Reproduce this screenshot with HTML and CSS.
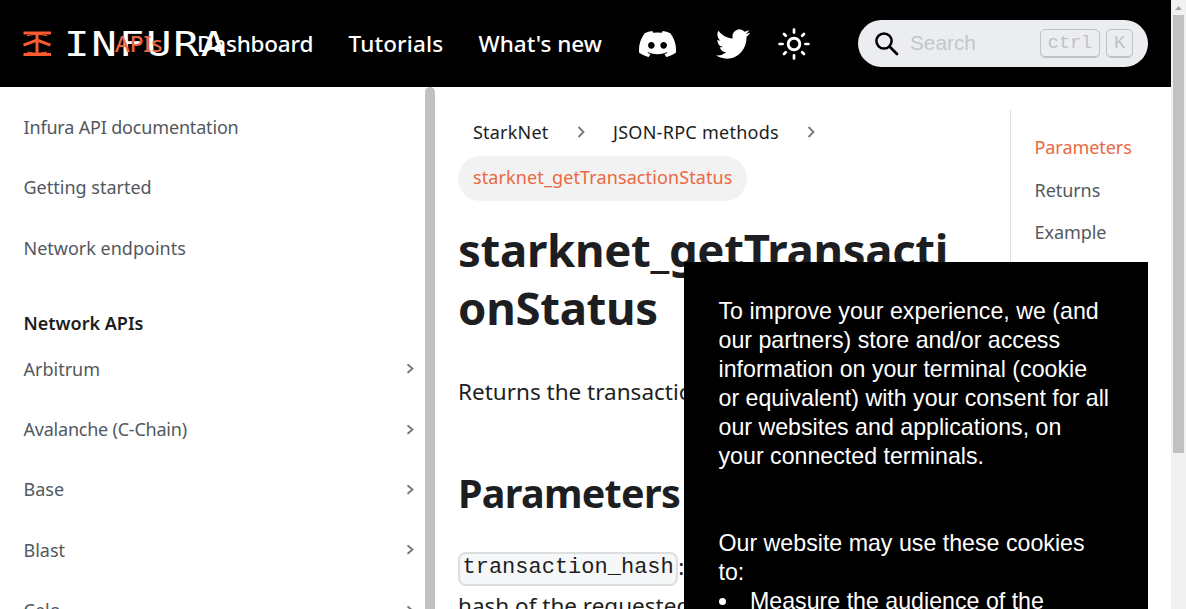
FILE: index.html
```html
<!DOCTYPE html>
<html lang="en">
<head>
<meta charset="utf-8">
<title>starknet_getTransactionStatus | INFURA</title>
<link rel="stylesheet" href="styles.css">
</head>
<body>
<div class="page">
  <header class="navbar">
    <a class="logo">
      <svg class="logo-mark" width="28" height="26" viewBox="0 0 28 26" fill="none" stroke="#ff5a30" stroke-width="3"><path d="M.5 2h27.500M.5 23.500h27.500M14 2v21.500"/><path d="M.5 14.200 14 9.200l13.500 5" stroke-width="3"/><path d="M4 4.600 14 3l10 1.600M4 21 14 22.500 24 21" stroke-width="1"/></svg>
      <svg class="logo-word" width="160" height="32"><text x="0" y="28" transform="scale(1.25 1)">INFURA</text></svg>
    </a>
    <nav class="links">
      <a class="link active">APIs</a>
      <a class="link dashboard">Dashboard</a>
      <a class="link tutorials">Tutorials</a>
      <a class="link">What's new</a>
    </nav>
    <div class="icons">
      <svg class="discord" width="37" height="26" viewBox="0 0 127 96" preserveAspectRatio="none" fill="#fff"><path d="M107.700 8.070A105.150 105.150 0 0 0 81.470 0a72.060 72.060 0 0 0-3.360 6.830 97.680 97.680 0 0 0-29.110 0A72.370 72.370 0 0 0 45.640 0a105.890 105.890 0 0 0-26.250 8.090C2.790 32.650-1.710 56.600.54 80.210a105.730 105.730 0 0 0 32.170 16.150 77.700 77.700 0 0 0 6.890-11.110 68.420 68.420 0 0 1-10.850-5.180c.91-.66 1.800-1.340 2.660-2a75.570 75.570 0 0 0 64.320 0c.87.71 1.760 1.390 2.660 2a68.680 68.680 0 0 1-10.870 5.190 77 77 0 0 0 6.890 11.100 105.250 105.250 0 0 0 32.190-16.140c2.640-27.380-4.510-51.110-18.900-72.150ZM42.450 65.690c-6.270 0-11.450-5.690-11.450-12.690s5-12.740 11.430-12.740S54 46 53.890 53s-5.050 12.690-11.440 12.690Zm42.240 0c-6.280 0-11.440-5.690-11.440-12.690s5-12.740 11.440-12.740S96.230 46 96.120 53s-5.040 12.690-11.430 12.690Z"/></svg>
      <svg class="twitter" width="34" height="30" viewBox="0 2 24 20" preserveAspectRatio="none" fill="#fff"><path d="M23.953 4.570a10 10 0 0 1-2.825.775 4.958 4.958 0 0 0 2.163-2.723c-.951.555-2.005.959-3.127 1.184a4.920 4.920 0 0 0-8.384 4.482C7.690 8.095 4.067 6.130 1.640 3.162a4.822 4.822 0 0 0-.666 2.475c0 1.710.870 3.213 2.188 4.096a4.904 4.904 0 0 1-2.228-.616v.060a4.923 4.923 0 0 0 3.946 4.827 4.996 4.996 0 0 1-2.212.085 4.936 4.936 0 0 0 4.604 3.417 9.867 9.867 0 0 1-6.102 2.105c-.390 0-.779-.023-1.170-.067a13.995 13.995 0 0 0 7.557 2.209c9.053 0 13.998-7.496 13.998-13.985 0-.210 0-.420-.015-.630A9.935 9.935 0 0 0 24 4.590z"/></svg>
      <svg class="sun" width="32" height="32" viewBox="0 0 32 32" fill="none" stroke="#fff" stroke-width="2.700" stroke-linecap="round"><circle cx="16" cy="16" r="5.800" stroke-width="2.900"/><path d="M16 1.600v3M16 27.400v3M1.600 16h3M27.400 16h3M6 6l1.800 1.800M24.200 24.200 26 26M6 26l1.800-1.800M24.200 7.800 26 6"/></svg>
    </div>
    <div class="search">
      <svg width="24" height="24" viewBox="0 0 24 24" fill="none" stroke="#000"><circle cx="9" cy="9" r="7.600" stroke-width="2.500"/><path d="m14.500 14.500 7.500 7.500" stroke-width="2.800" stroke-linecap="round"/></svg>
      <span class="placeholder">Search</span>
      <kbd class="key ctrl">ctrl</kbd><kbd class="key">K</kbd>
    </div>
  </header>
  <div class="body">
    <aside class="sidebar">
      <ul class="menu">
        <li class="item tight">Infura API documentation</li>
        <li class="item">Getting started</li>
        <li class="item">Network endpoints</li>
        <li class="group">Network APIs</li>
        <li class="item">Arbitrum<svg class="caret" width="7" height="11" viewBox="0 0 7 11"><path d="M1.200 1v1L5.500 5.500 1.200 9.200v1"/></svg></li>
        <li class="item tighter">Avalanche (C-Chain)<svg class="caret" width="7" height="11" viewBox="0 0 7 11"><path d="M1.200 1v1L5.500 5.500 1.200 9.200v1"/></svg></li>
        <li class="item">Base<svg class="caret" width="7" height="11" viewBox="0 0 7 11"><path d="M1.200 1v1L5.500 5.500 1.200 9.200v1"/></svg></li>
        <li class="item">Blast<svg class="caret" width="7" height="11" viewBox="0 0 7 11"><path d="M1.200 1v1L5.500 5.500 1.200 9.200v1"/></svg></li>
        <li class="item">Celo<svg class="caret" width="7" height="11" viewBox="0 0 7 11"><path d="M1.200 1v1L5.500 5.500 1.200 9.200v1"/></svg></li>
      </ul>
      <div class="sidebar-thumb"></div>
    </aside>
    <main class="content">
      <div class="crumbs">
        <span class="crumb first">StarkNet</span>
        <svg class="sep" width="9" height="14" viewBox="0 0 9 14"><path d="m1.500 2 5 5-5 5"/></svg>
        <span class="crumb second">JSON-RPC methods</span>
        <svg class="sep" width="9" height="14" viewBox="0 0 9 14"><path d="m1.500 2 5 5-5 5"/></svg>
      </div>
      <span class="pill">starknet_getTransactionStatus</span>
      <h1 class="title">starknet_getTransacti<br>onStatus</h1>
      <p class="lead">Returns the transaction status.</p>
      <h2 class="subtitle">Parameters</h2>
      <p class="param"><code class="code">transaction_hash</code>:<br>hash of the requested</p>
    </main>
    <aside class="toc">
      <a class="toc-link active">Parameters</a>
      <a class="toc-link">Returns</a>
      <a class="toc-link">Example</a>
    </aside>
  </div>
</div>
<div class="scrollbar">
  <svg width="15" height="15" viewBox="0 0 15 15"><path d="M4 10h7L7.500 6z" fill="#a3a3a3"/></svg>
  <div class="thumb"></div>
</div>
<section class="cookie">
  <p class="cookie-text">To improve your experience, we (and<br>our partners) store and/or access<br>information on your terminal (cookie<br>or equivalent) with your consent for all<br>our websites and applications, on<br>your connected terminals.</p>
  <p class="cookie-text">Our website may use these cookies<br>to:</p>
  <ul class="cookie-list"><li class="cookie-item">Measure the audience of the</li></ul>
</section>
</body>
</html>
```
FILE: styles.css
```css
* { box-sizing: border-box; }
body { margin: 0; display: flex; width: 1186px; height: 609px; overflow: hidden; background: #fff; font-family: "Noto Sans", sans-serif; color: #1c1e21; position: relative; }
p, h1, h2, ul { margin: 0; padding: 0; }
svg { display: block; flex: none; }
.page { width: 1171px; height: 609px; display: flex; flex-direction: column; }

.navbar { flex: none; height: 87px; background: #000; display: flex; align-items: center; padding: 0 23px; }
.logo { flex: none; width: 92px; display: flex; align-items: center; gap: 13px; }
.logo-word { overflow: visible; }
.logo-word text { font-family: "DejaVu Sans Mono", monospace; font-size: 34px; letter-spacing: 1.4px; fill: #fff; }
.links { flex: none; width: 524px; display: flex; position: relative; white-space: nowrap; font-size: 22.5px; font-weight: 500; line-height: 30px; color: #fff; }
.link.active { color: #eb6841; width: 82px; }
.dashboard { width: 151.5px; letter-spacing: -.2px; }
.tutorials { width: 130px; letter-spacing: .15px; }
.icons { flex: none; display: flex; align-items: center; width: 219px; }
.twitter { margin-left: 40px; }
.sun { margin-left: 28px; }
.search { flex: none; width: 290px; height: 47px; border-radius: 24px; background: #ebedf0; display: flex; align-items: center; padding: 0 15px 0 17px; font-family: "Liberation Sans", sans-serif; font-size: 20.8px; color: #c1c7cd; }
.placeholder { margin: 0 0 1px 11px; flex: 1; }
.key { height: 29px; width: 27px; border: 1px solid #bec3c9; border-radius: 5px; box-shadow: inset 0 -1px 0 #bec3c9; font: 18.5px/27px "Liberation Mono", monospace; color: #bec3c9; text-align: center; }
.ctrl { width: 60px; margin-right: 6px; }

.body { flex: 1; min-height: 0; display: flex; overflow: hidden; }
.sidebar { flex: none; width: 435px; display: flex; }
.menu { width: 425px; padding: 9.8px 11px 0 23.5px; list-style: none; font-size: 18px; color: #525860; }
.item { height: 60.3px; display: flex; align-items: center; justify-content: space-between; }
.tight { letter-spacing: -.17px; }
.tighter { letter-spacing: -.22px; }
.group { height: 61px; padding-top: 30px; line-height: 30px; font-weight: 600; color: #1c1e21; }
.caret, .sep { fill: none; stroke: #777; stroke-width: 1.8; }
.sidebar-thumb { width: 10px; background: #c1c1c1; border-radius: 5px 5px 0 0; }
.content { flex: none; width: 575px; padding: 22px 0 0 23px; white-space: nowrap; }
.crumbs { height: 45px; display: flex; align-items: center; padding-left: 15px; font-size: 18px; }
.first { width: 104px; letter-spacing: .2px; }
.second { width: 194px; letter-spacing: .27px; margin-left: 27px; }
.pill { display: inline-flex; height: 45px; margin-top: 2px; padding: 0 14px 3px 15px; align-items: center; border-radius: 23px; background: #f2f2f2; color: #eb6841; font-size: 18px; letter-spacing: .11px; vertical-align: top; }
.title { margin-top: 19px; font-size: 45.5px; line-height: 58px; font-weight: 700; letter-spacing: -.3px; }
.lead { margin-top: 37px; font-size: 22.5px; line-height: 37px; }
.subtitle { margin-top: 58px; font-size: 39.5px; line-height: 50px; font-weight: 700; letter-spacing: -.7px; }
.param { margin-top: 29px; font-size: 22.5px; line-height: 39px; }
.code { display: inline-block; height: 34px; border: 2px solid #dcdee0; border-radius: 8px; background: #f6f7f8; padding: 0 2.5px; font: 22px/28px "Liberation Mono", monospace; vertical-align: middle; }
.toc { width: 161px; margin-top: 23px; padding: 16px 0 0 23.5px; border-left: 1px solid #dadde1; display: flex; flex-direction: column; font-size: 18px; letter-spacing: -.06px; line-height: 42.5px; color: #525860; }
.toc-link.active { color: #eb6841; }

.scrollbar { width: 15px; background: #f1f1f1; }
.thumb { width: 11px; height: 438px; margin-left: 2px; background: #c1c1c1; }

.cookie { position: absolute; left: 684px; top: 262px; width: 464px; height: 347px; overflow: hidden; background: #000; color: #fff; padding: 35px 34.5px; font: 23.2px/29px "Liberation Sans", sans-serif; white-space: nowrap; }
.cookie-text + .cookie-text { margin-top: 58px; }
.cookie-list { list-style: none; }
.cookie-item { display: flex; align-items: center; gap: 24.500px; }
.cookie-item::before { content: ""; width: 7px; height: 7px; border-radius: 50%; background: #fff; }
```
